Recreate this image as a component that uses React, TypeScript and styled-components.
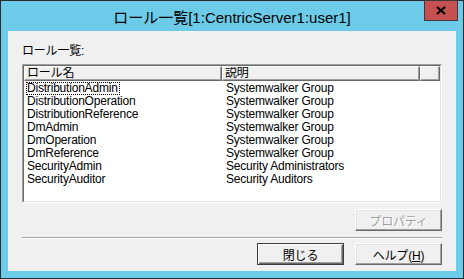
import React from 'react';
import styled, { createGlobalStyle } from 'styled-components';

const Global = createGlobalStyle`
  html, body { margin: 0; padding: 0; background: #ffffff; }
  body { font-family: "Liberation Sans", "Noto Sans CJK JP", sans-serif; }
`;

const Window = styled.div`
  position: relative;
  width: 464px;
  height: 279px;
  box-sizing: border-box;
  border: 1px solid #2b2b2b;
  background: #6bcbe9;
  display: flex;
  flex-direction: column;
  padding: 0 7px 7px 7px;
`;

const TitleBar = styled.div`
  height: 30px;
  display: flex;
  align-items: center;
  justify-content: center;
  font-size: 15px;
  color: #000;
  font-family: "Liberation Sans", "Noto Sans CJK JP", sans-serif;
`;

const CloseButton = styled.div`
  position: absolute;
  top: -1px;
  right: 5px;
  width: 34px;
  height: 21px;
  box-sizing: border-box;
  background: #c75050;
  border: 1px solid #3b3b3b;
  display: flex;
  align-items: center;
  justify-content: center;
`;

const Client = styled.div`
  flex: 1;
  background: #f0f0f0;
  display: flex;
  flex-direction: column;
  padding: 14px 14px 0 14px;
  font-size: 12px;
  letter-spacing: -0.2px;
  color: #000;
`;

const Label = styled.div`
  height: 13px;
  line-height: 13px;
`;

const ListFrame = styled.div`
  margin-top: 6px;
  height: 139px;
  box-sizing: border-box;
  border: 1px solid;
  border-color: #a0a0a0 #ffffff #ffffff #a0a0a0;
  display: flex;
`;

const ListInner = styled.div`
  flex: 1;
  border: 1px solid;
  border-color: #696969 #e3e3e3 #e3e3e3 #696969;
  background: #ffffff;
  display: flex;
  flex-direction: column;
`;

const Header = styled.div`
  display: flex;
  height: 15px;
`;

const HeaderCell = styled.div<{ $w?: number }>`
  ${(p) => (p.$w ? `width: ${p.$w}px;` : 'flex: 1;')}
  box-sizing: border-box;
  background: #f0f0f0;
  border-top: 1px solid #ffffff;
  border-left: 1px solid #ffffff;
  border-right: 1px solid #696969;
  border-bottom: 1px solid #696969;
  box-shadow: inset -1px -1px 0 #a0a0a0;
  padding-left: 2px;
  line-height: 13px;
  white-space: nowrap;
  overflow: hidden;
`;

const Rows = styled.div`
  display: flex;
  flex-direction: column;
  padding-top: 1px;
`;

const Row = styled.div`
  display: flex;
  height: 13px;
  line-height: 13px;
`;

const Cell = styled.div<{ $w: number; $pad: number }>`
  width: ${(p) => p.$w}px;
  box-sizing: border-box;
  padding-left: ${(p) => p.$pad}px;
  white-space: nowrap;
`;

const Focus = styled.span<{ $on: boolean }>`
  display: inline-block;
  box-sizing: border-box;
  height: 13px;
  padding: 0 2px 0 1px;
  outline: ${(p) => (p.$on ? '1px dotted #000' : 'none')};
  outline-offset: -1px;
`;

const Button = styled.button<{ $default?: boolean }>`
  width: 87px;
  height: 22px;
  box-sizing: border-box;
  margin: 0;
  padding: 0;
  background: #f0f0f0;
  font-family: "Liberation Sans", "Noto Sans CJK JP", sans-serif;
  font-size: 12px;
  letter-spacing: -0.2px;
  color: #000;
  border: 1px solid;
  border-color: ${(p) => (p.$default ? '#3c3c3c' : '#ffffff #696969 #696969 #ffffff')};
  box-shadow: ${(p) =>
    p.$default
      ? 'inset 1px 1px 0 #ffffff, inset -1px -1px 0 #696969, inset -2px -2px 0 #a0a0a0'
      : 'inset -1px -1px 0 #a0a0a0, inset 1px 1px 0 #e3e3e3'};
  &:disabled {
    color: #a0a0a0;
    text-shadow: 1px 1px 0 #ffffff;
  }
`;

const PropRow = styled.div`
  margin-top: 6px;
  display: flex;
  justify-content: flex-end;
`;

const Separator = styled.div`
  margin-top: 6px;
  border-top: 1px solid #a0a0a0;
  border-bottom: 1px solid #ffffff;
`;

const ButtonRow = styled.div`
  margin-top: 4px;
  display: flex;
  justify-content: flex-end;
  gap: 11px;
`;

const roles: [string, string][] = [
  ['DistributionAdmin', 'Systemwalker Group'],
  ['DistributionOperation', 'Systemwalker Group'],
  ['DistributionReference', 'Systemwalker Group'],
  ['DmAdmin', 'Systemwalker Group'],
  ['DmOperation', 'Systemwalker Group'],
  ['DmReference', 'Systemwalker Group'],
  ['SecurityAdmin', 'Security Administrators'],
  ['SecurityAuditor', 'Security Auditors'],
];

export default function App() {
  return (
    <>
      <Global />
      <Window>
        <TitleBar>ロール一覧[1:CentricServer1:user1]</TitleBar>
        <CloseButton>
          <svg width="10" height="9" viewBox="0 0 10 9">
            <path d="M1 1 L9 8 M9 1 L1 8" stroke="#000" strokeWidth="2.2" fill="none" />
          </svg>
        </CloseButton>
        <Client>
          <Label>ロール一覧:</Label>
          <ListFrame>
            <ListInner>
              <Header>
                <HeaderCell $w={198}>ロール名</HeaderCell>
                <HeaderCell $w={198}>説明</HeaderCell>
                <HeaderCell />
              </Header>
              <Rows>
                {roles.map(([name, desc], i) => (
                  <Row key={name}>
                    <Cell $w={198} $pad={2}>
                      <Focus $on={i === 0}>{name}</Focus>
                    </Cell>
                    <Cell $w={198} $pad={4}>{desc}</Cell>
                  </Row>
                ))}
              </Rows>
            </ListInner>
          </ListFrame>
          <PropRow>
            <Button disabled>プロパティ</Button>
          </PropRow>
          <Separator />
          <ButtonRow>
            <Button $default>閉じる</Button>
            <Button>
              ヘルプ(<u>H</u>)
            </Button>
          </ButtonRow>
        </Client>
      </Window>
    </>
  );
}
